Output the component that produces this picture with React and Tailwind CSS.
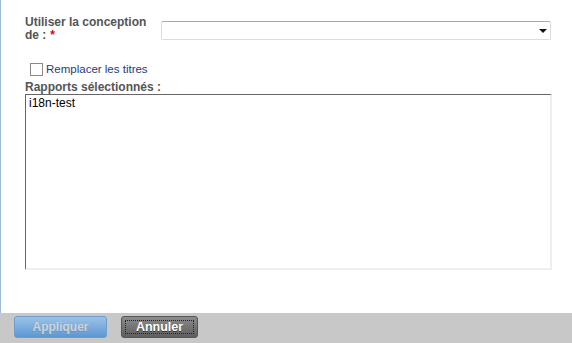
import React, { useState } from "react";

const font = { fontFamily: '"Liberation Sans", Arial, sans-serif' };

const App = () => {
  const [replace, setReplace] = useState(false);

  return (
    <div
      className="w-[572px] h-[343px] flex flex-col bg-white overflow-hidden"
      style={font}
    >
      {/* Form body */}
      <div className="flex-1 border-l border-[#9fbcdc] pl-[24px] pr-[20px] pt-[16px]">
        {/* Design picker */}
        <div className="flex items-start">
          <div className="w-[136px] text-[12px] leading-[13px] font-bold text-[#555]">
            <div>Utiliser la conception</div>
            <div className="flex">
              <span>de :</span>
              <span className="ml-[4px] text-[#e00000]">*</span>
            </div>
          </div>
          <div className="relative mt-[5px] w-[390px] h-[19px] rounded-[2px] border border-[#dcdcdc] border-t-[#a9a9a9] bg-white">
            <svg
              className="absolute right-[3px] top-[7px]"
              width="8"
              height="4"
              viewBox="0 0 8 4"
            >
              <path d="M0 0h8L4 4z" fill="#111" />
            </svg>
          </div>
        </div>

        {/* Replace titles */}
        <label className="flex items-center mt-[21px] ml-[5px] h-[13px] cursor-pointer">
          <span
            onClick={() => setReplace(!replace)}
            className="w-[13px] h-[13px] border border-[#8a8a8a] bg-white flex items-center justify-center"
          >
            {replace && <span className="w-[7px] h-[7px] bg-[#333]" />}
          </span>
          <span className="ml-[3px] text-[11.5px] leading-[13px] text-[#1d3b78]">
            Remplacer les titres
          </span>
        </label>

        {/* Selected reports */}
        <div className="mt-[5px] text-[12px] leading-[13px] font-bold text-[#555]">
          Rapports sélectionnés :
        </div>
        <div className="w-[527px] h-[176px] border-2 border-l-[#666] border-t-[#666] border-r-[#eee] border-b-[#eee] border-l-[1px] border-t-[1px] px-[3px] pt-[1px] text-[12px] leading-[14px] text-black">
          i18n-test
        </div>
      </div>

      {/* Footer buttons */}
      <div className="h-[30px] bg-[#c8c8c8] flex items-start pt-[3px] pl-[14px] gap-[14px]">
        <button
          disabled
          className="w-[93px] h-[22px] rounded-[3px] border border-[#6f9ccb] bg-gradient-to-b from-[#9cc2e8] to-[#5c98d2] text-[12px] font-bold text-[#c9d5e0] [text-shadow:0_1px_0_#7e8c99]"
        >
          Appliquer
        </button>
        <button className="relative w-[77px] h-[22px] rounded-[3px] border border-[#555] bg-gradient-to-b from-[#8c8c8c] to-[#5e5e5e] text-[12.5px] font-bold text-white [text-shadow:0_1px_0_#333]">
          <span className="absolute inset-[3px] border border-dotted border-[#222]" />
          Annuler
        </button>
      </div>
    </div>
  );
};

export default App;
